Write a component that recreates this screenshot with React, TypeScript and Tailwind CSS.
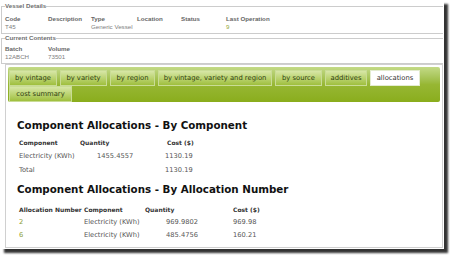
import React from "react";

const row1: [string, number][] = [
  ["by vintage", 48],
  ["by variety", 47],
  ["by region", 45],
  ["by vintage, variety and region", 114],
  ["by source", 47],
  ["additives", 42],
];

function Tab({ label, w, active }: { label: string; w: number; active?: boolean }) {
  if (active) {
    return (
      <div
        className="h-[16px] flex items-center justify-center bg-white border border-[#e4ecd0] text-[#333]"
        style={{ width: w }}
      >
        {label}
      </div>
    );
  }
  return (
    <div
      className="h-[16px] flex items-center justify-center border border-[#c9dc95] bg-gradient-to-b from-[#d7e6a6] via-[#bcd472] to-[#9fbf3c] text-[#2f3d12]"
      style={{ width: w }}
    >
      {label}
    </div>
  );
}

export default function App() {
  return (
    <div className="w-[450px] h-[255px] bg-white relative overflow-hidden" style={{ fontFamily: "'Liberation Sans', Arial, sans-serif" }}>
      <div className="w-[444px] h-[249px] bg-white shadow-[4px_4px_2px_rgba(0,0,0,0.8)] flex flex-col">
        {/* Vessel details */}
        <fieldset className="ml-[1px] w-[442px] mt-[2px] border-t border-b border-l border-[#cccccc] pl-[3px] pr-0 pt-[5px] pb-[2px]">
          <legend className="text-[6.2px] font-bold text-[#6e6e6e] leading-[8px]">Vessel Details</legend>
          <div className="flex text-[6.2px] leading-[8px] text-[#808080]">
            <div className="w-[43px]"><div className="font-bold text-[#666]">Code</div><div>T45</div></div>
            <div className="w-[43px]"><div className="font-bold text-[#666]">Description</div><div>&nbsp;</div></div>
            <div className="w-[46px]"><div className="font-bold text-[#666]">Type</div><div>Generic Vessel</div></div>
            <div className="w-[44px]"><div className="font-bold text-[#666]">Location</div><div>&nbsp;</div></div>
            <div className="w-[45px]"><div className="font-bold text-[#666]">Status</div><div>&nbsp;</div></div>
            <div><div className="font-bold text-[#666]">Last Operation</div><div className="text-[#94a836]">9</div></div>
          </div>
        </fieldset>
        <fieldset className="ml-[1px] w-[442px] border-t border-b border-l border-[#cccccc] pl-[3px] pr-0 pt-[3px] pb-[2px]">
          <legend className="text-[6.2px] font-bold text-[#6e6e6e] leading-[8px]">Current Contents</legend>
          <div className="flex text-[6.2px] leading-[8px] text-[#808080]">
            <div className="w-[43px]"><div className="font-bold text-[#666]">Batch</div><div>12ABCH</div></div>
            <div><div className="font-bold text-[#666]">Volume</div><div>73501</div></div>
          </div>
        </fieldset>
        {/* Tab panel */}
        <div
          className="ml-[5px] w-[438px] flex-1 border border-[#d0d0d0] p-[2px] mb-[1px] flex flex-col"
          style={{ fontFamily: "'DejaVu Sans', Verdana, sans-serif" }}
        >
          <div className="rounded-[2px] bg-gradient-to-b from-[#c3da86] via-[#97b733] to-[#8aad1c] pl-[1px] pt-[3px] text-[6.8px]">
            <div className="flex gap-[3px]">
              {row1.map(([t, w]) => (
                <Tab key={t} label={t} w={w} />
              ))}
              <Tab label="allocations" w={50} active />
            </div>
            <div className="flex">
              <Tab label="cost summary" w={63} />
            </div>
          </div>
          <div className="pl-[9px] text-[#555]">
            <div className="mt-[17px] text-[10.3px] font-bold text-[#111] leading-[12px]">Component Allocations - By Component</div>
            <div className="mt-[4px] text-[6.7px]">
              <div className="flex h-[14px] items-center font-bold text-[6px] text-[#333]">
                <div className="w-[63px] pl-[2px]">Component</div>
                <div className="w-[87px]">Quantity</div>
                <div>Cost ($)</div>
              </div>
              <div className="flex h-[15px] items-center">
                <div className="w-[63px] pl-[2px]">Electricity (KWh)</div>
                <div className="w-[85px] pl-[17px]">1455.4557</div>
                <div>1130.19</div>
              </div>
              <div className="flex h-[12px] items-center">
                <div className="w-[148px] pl-[2px]">Total</div>
                <div>1130.19</div>
              </div>
            </div>
            <div className="mt-[7px] text-[10.3px] font-bold text-[#111] leading-[12px]">Component Allocations - By Allocation Number</div>
            <div className="mt-[8px] text-[6.7px]">
              <div className="flex h-[13px] items-center font-bold text-[6px] text-[#333]">
                <div className="w-[67px] pl-[2px]">Allocation Number</div>
                <div className="w-[61px]">Component</div>
                <div className="w-[88px]">Quantity</div>
                <div>Cost ($)</div>
              </div>
              <div className="flex h-[13px] items-center">
                <div className="w-[67px] pl-[2px] text-[#8a9c34]">2</div>
                <div className="w-[61px]">Electricity (KWh)</div>
                <div className="w-[88px] pl-[21px]">969.9802</div>
                <div>969.98</div>
              </div>
              <div className="flex h-[13px] items-center">
                <div className="w-[67px] pl-[2px] text-[#8a9c34]">6</div>
                <div className="w-[61px]">Electricity (KWh)</div>
                <div className="w-[88px] pl-[21px]">485.4756</div>
                <div>160.21</div>
              </div>
            </div>
          </div>
        </div>
      </div>
    </div>
  );
}
